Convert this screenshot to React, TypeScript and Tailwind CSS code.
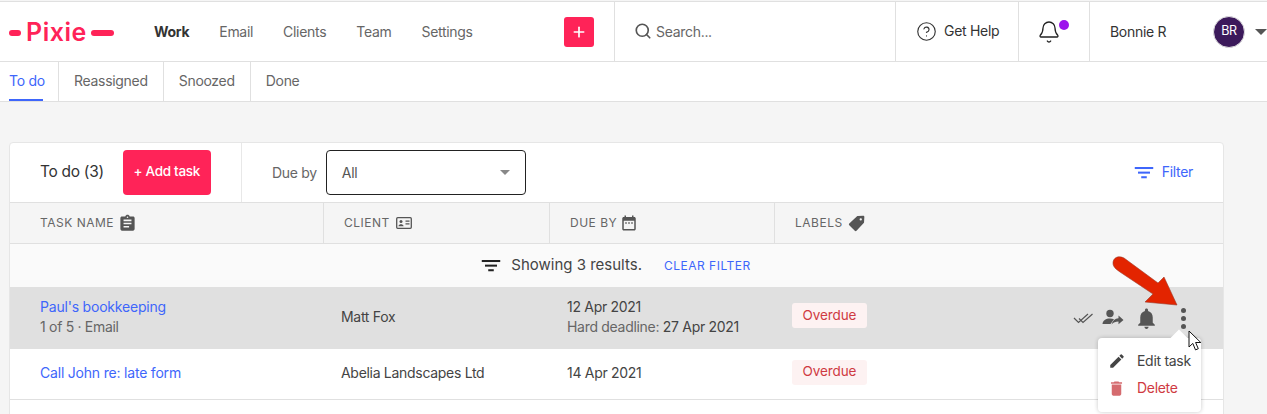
import React from "react";
import { Search, CircleHelp, Bell, Plus } from "lucide-react";

const FilterIcon = ({ className }: { className: string }) => (
  <svg viewBox="0 0 20 13" className={className} fill="currentColor">
    <rect x="0" y="0" width="20" height="2.2" />
    <rect x="3.5" y="5" width="13" height="2.2" />
    <rect x="7" y="10" width="6" height="2.2" />
  </svg>
);

const Clipboard = () => (
  <svg viewBox="0 0 24 24" className="w-[19px] h-[19px] text-[#555]" fill="currentColor">
    <path d="M19 3h-4.180C14.400 1.840 13.300 1 12 1s-2.400.840-2.820 2H5c-1.100 0-2 .900-2 2v14c0 1.100.900 2 2 2h14c1.100 0 2-.900 2-2V5c0-1.100-.900-2-2-2zm-7 0c.550 0 1 .450 1 1s-.450 1-1 1-1-.450-1-1 .450-1 1-1zm2 14H7v-2h7v2zm3-4H7v-2h10v2zm0-4H7V7h10v2z" />
  </svg>
);
const IdCard = () => (
  <svg viewBox="0 0 16 12" className="w-[16px] h-[12px] text-[#555]" fill="none" stroke="currentColor" strokeWidth="1.300">
    <rect x=".7" y=".7" width="14.600" height="10.600" rx="1" />
    <circle cx="5" cy="4.600" r="1.500" fill="currentColor" stroke="none" />
    <path d="M2.400 9.200c.3-1.500 1.400-2 2.600-2s2.300.5 2.600 2z" fill="currentColor" stroke="none" />
    <path d="M9.500 4.200h4M9.500 6.800h4" />
  </svg>
);
const CalendarIcon = () => (
  <svg viewBox="0 0 24 24" className="w-[18px] h-[18px] text-[#555]" fill="currentColor">
    <path d="M9 11H7v2h2v-2zm4 0h-2v2h2v-2zm4 0h-2v2h2v-2zm2-7h-1V2h-2v2H8V2H6v2H5c-1.110 0-2 .900-2 2v14c0 1.100.890 2 2 2h14c1.100 0 2-.900 2-2V6c0-1.100-.900-2-2-2zm0 16H5V9h14v11z" />
  </svg>
);
const TagIcon = () => (
  <svg viewBox="0 0 16 16" className="w-[17px] h-[17px] text-[#555]" fill="currentColor">
    <path fillRule="evenodd" d="M9.200.9 14.300.6c.6 0 1.100.5 1.100 1.100l-.3 5.100c0 .3-.1.500-.3.700L8 14.800a1.100 1.100 0 0 1-1.600 0L1.200 9.600a1.100 1.100 0 0 1 0-1.600L8.500 1.200c.2-.2.400-.3.700-.3zM12 3a1.100 1.100 0 1 0 0 2.200A1.100 1.100 0 0 0 12 3z" />
  </svg>
);

const Overdue = () => (
  <span className="inline-flex items-center justify-center w-[75px] h-[25px] rounded-[3px] bg-[#fdf2f2] text-[#cf3a42] text-[13.500px] tracking-[-0.1px] pb-[1px]">Overdue</span>
);

const tabs = ["To do", "Reassigned", "Snoozed", "Done"];

export default function App() {
  return (
    <div className="relative w-[1267px] h-[414px] overflow-hidden bg-[#f5f5f5] text-[#333] font-['Inter','Liberation_Sans',sans-serif] tracking-[-0.3px]">
      <header className="h-[61px] bg-white border-t border-t-[#e0e0e0] border-b border-b-[#e0e0e0] mt-[1px] flex items-stretch">
        <div className="w-[154px] shrink-0 flex items-center pl-[9px]">
          <div className="flex items-center pt-[2px]">
            <span className="w-[12px] h-[6px] rounded-full bg-[#ff2358] mr-[5px]" />
            <span className="text-[#ff2358] text-[25px] leading-none font-semibold tracking-[0.5px] mr-[4px]">Pixie</span>
            <span className="w-[23px] h-[6px] rounded-full bg-[#ff2358]" />
          </div>
        </div>
        <nav className="w-[410px] shrink-0 flex items-center gap-[30px] text-[14px] text-[#666] pb-[1px]">
          <span className="font-bold text-[#333]">Work</span>
          <span>Email</span>
          <span>Clients</span>
          <span>Team</span>
          <span>Settings</span>
        </nav>
        <div className="w-[51px] shrink-0 border-r border-[#e0e0e0] flex items-center">
          <button className="w-[30px] h-[30px] rounded-[3px] bg-[#ff2358] text-white flex items-center justify-center">
            <Plus size={16} strokeWidth={2.5} />
          </button>
        </div>
        <div className="w-[281px] shrink-0 border-r border-[#e0e0e0] flex items-center pl-[19px] gap-[4px] text-[14px] text-[#666] pb-[1px]">
          <Search size={18} strokeWidth={2.2} className="text-[#555]" />
          <span>Search...</span>
        </div>
        <div className="w-[123px] shrink-0 border-r border-[#e0e0e0] flex items-center pl-[20px] gap-[7px] text-[14px] text-[#333]">
          <CircleHelp size={21} strokeWidth={1.3} />
          <span className="pb-[2px]">Get Help</span>
        </div>
        <div className="w-[71px] shrink-0 border-r border-[#e0e0e0] flex items-center pl-[18px] relative">
          <Bell size={24} strokeWidth={1.3} className="text-[#222]" />
          <span className="absolute left-[40px] top-[18px] w-[10px] h-[10px] rounded-full bg-[#9c14ec]" />
        </div>
        <div className="flex-1 flex items-center pl-[20px] text-[14px] text-[#333]">
          <span className="w-[103px]">Bonnie R</span>
          <span className="w-[32px] h-[32px] rounded-full bg-[#3c1a5b] border border-[#e0e0e0] text-white text-[12.500px] flex items-center justify-center">BR</span>
          <span className="ml-[10px] w-0 h-0 border-x-[6px] border-x-transparent border-t-[6px] border-t-[#555]" />
        </div>
      </header>
      <div className="h-[40px] bg-white border-b border-[#e0e0e0] flex items-stretch text-[14px] text-[#666]">
        {tabs.map((t, i) => (
          <div key={t} className={i === 0 ? "relative w-[59px] pl-[9px] border-r border-[#e0e0e0] flex items-center text-[#3e66fb]" : i === 3 ? "px-[15px] flex items-center" : "px-[15px] border-r border-[#e0e0e0] flex items-center"}>
            <span className="pb-[2px]">{t}</span>
            {i === 0 && <span className="absolute left-[9px] bottom-0 w-[34px] h-[2px] bg-[#3e66fb]" />}
          </div>
        ))}
      </div>
      <main className="mt-[40px] ml-[9px] w-[1215px] border border-[#e6e6e6] rounded-t-[4px] bg-white">
        <div className="h-[60px] flex items-stretch border-b border-[#e0e0e0]">
          <div className="w-[232px] shrink-0 border-r border-[#e8e8e8] flex items-center pl-[30px] gap-[19px]">
            <span className="text-[15.500px] text-[#333] pb-[1px]">To do (3)</span>
            <button className="w-[88px] h-[45px] rounded-[4px] bg-[#ff2358] text-white text-[13.500px] font-medium pb-[2px]">+ Add task</button>
          </div>
          <div className="flex-1 flex items-center pl-[30px] text-[14px]">
            <span className="text-[#666] mr-[9px]">Due by</span>
            <div className="w-[200px] h-[45px] rounded-[4px] border border-[#222] flex items-center justify-between pl-[15px] pr-[15px] text-[#555]">
              <span>All</span>
              <span className="w-0 h-0 border-x-[5px] border-x-transparent border-t-[5px] border-t-[#888]" />
            </div>
          </div>
          <div className="flex items-center gap-[8px] pr-[30px] text-[14px] text-[#3e66fb]">
            <FilterIcon className="w-[20px] h-[12px]" />
            <span className="pb-[2px]">Filter</span>
          </div>
        </div>
        <div className="h-[41px] bg-[#f5f5f5] border-b border-[#e0e0e0] flex items-stretch text-[12px] tracking-[0.5px] text-[#666]">
          <div className="w-[314px] border-r border-[#e0e0e0] flex items-center gap-[4px] pl-[30px]"><span>TASK NAME</span><Clipboard /></div>
          <div className="w-[226px] border-r border-[#e0e0e0] flex items-center gap-[6px] pl-[20px]"><span>CLIENT</span><IdCard /></div>
          <div className="w-[225px] border-r border-[#e0e0e0] flex items-center gap-[3px] pl-[20px]"><span>DUE BY</span><CalendarIcon /></div>
          <div className="flex-1 flex items-center gap-[5px] pl-[20px]"><span>LABELS</span><TagIcon /></div>
        </div>
        <div className="h-[43px] bg-[#fafafa] flex items-center justify-center pr-[1px] tracking-[0px]">
          <FilterIcon className="w-[20px] h-[12px] text-[#222] mr-[10px]" />
          <span className="text-[15px] text-[#444]">Showing 3 results.</span>
          <span className="ml-[22px] text-[12px] tracking-[0.5px] text-[#3e66fb]">CLEAR FILTER</span>
        </div>
        <div className="h-[62px] bg-[#e0e0e0] flex items-center text-[14px]">
          <div className="w-[331px] pl-[30px] pb-[3px]">
            <div className="text-[#3e66fb] tracking-[-0.2px] leading-[20px]">Paul's bookkeeping</div>
            <div className="text-[#666] leading-[20px]">1 of 5 · Email</div>
          </div>
          <div className="w-[226px] text-[#444] pb-[3px]">Matt Fox</div>
          <div className="w-[225px] text-[#444] pb-[3px]">
            <div className="leading-[20px]">12 Apr 2021</div>
            <div className="leading-[20px]"><span className="text-[#666]">Hard deadline:</span> 27 Apr 2021</div>
          </div>
          <div className="pb-[5px]"><Overdue /></div>
          <div className="ml-auto mr-[37px] flex items-center text-[#555]">
            <svg viewBox="0 0 20 12" className="w-[20px] h-[12px]" fill="none" stroke="currentColor" strokeWidth="1.200">
              <path d="M1 6l4.500 4.500L15 2M6 6.500l4 4L19.500 2" />
            </svg>
            <svg viewBox="0 0 22 18" className="ml-[9px] w-[22px] h-[18px]" fill="currentColor">
              <circle cx="8" cy="4.500" r="3.700" />
              <path d="M.5 15c0-3.500 3.500-5.500 7.500-5.500 1.500 0 2.800.3 4 .8L8.500 15z" />
              <path d="M21.500 11l-5-4.500v2.700c-3.500.3-6 2.300-7 6.300 2-2.200 4-3 7-3v2.800z" />
            </svg>
            <svg viewBox="0 0 24 24" className="ml-[10px] w-[25px] h-[25px]" fill="currentColor">
              <path d="M12 22c1.100 0 2-.900 2-2h-4c0 1.100.900 2 2 2zm6-6v-5c0-3.070-1.630-5.640-4.500-6.320V4c0-.830-.670-1.500-1.500-1.500s-1.500.670-1.500 1.500v.680C7.640 5.360 6 7.920 6 11v5l-2 2v1h16v-1l-2-2z" />
            </svg>
            <div className="ml-[22px] flex flex-col gap-[3px]">
              <span className="w-[5px] h-[5px] rounded-full bg-[#555]" />
              <span className="w-[5px] h-[5px] rounded-full bg-[#555]" />
              <span className="w-[5px] h-[5px] rounded-full bg-[#555]" />
            </div>
          </div>
        </div>
        <div className="h-[51px] bg-white border-b border-[#e0e0e0] flex items-center text-[14px]">
          <div className="w-[331px] pl-[30px] text-[#3e66fb] tracking-[-0.2px] pb-[3px]">Call John re: late form</div>
          <div className="w-[226px] text-[#444] pb-[3px]">Abelia Landscapes Ltd</div>
          <div className="w-[225px] text-[#444] pb-[3px]">14 Apr 2021</div>
          <div className="pb-[4px]"><Overdue /></div>
        </div>
        <div className="h-[20px] bg-white" />
      </main>

      <div className="absolute left-[1098px] top-[338px] w-[103px] h-[74px] rounded-[4px] bg-white shadow-[0_0_4px_rgba(0,0,0,0.22)] text-[14px]">
        <span className="absolute left-[75px] -top-[6px] w-[12px] h-[12px] rotate-45 bg-white" />
        <div className="relative h-[47px] pt-[13px] flex items-start pl-[10px] gap-[11px] text-[#444]">
          <svg viewBox="0 0 24 24" className="w-[18px] h-[18px] mt-[1px] text-[#444]" fill="currentColor">
            <path d="M3 17.250V21h3.750L17.810 9.940l-3.750-3.750L3 17.250zM20.710 7.040a1 1 0 0 0 0-1.410l-2.340-2.340a1 1 0 0 0-1.410 0l-1.830 1.830 3.750 3.750 1.830-1.830z" />
          </svg>
          <span className="leading-[20px] text-[14px]">Edit task</span>
        </div>
        <div className="relative flex items-start pl-[10px] gap-[11px] -mt-[7px] text-[#cf3a42]">
          <svg viewBox="0 0 24 24" className="w-[19px] h-[19px] -ml-[1px] mt-[1px] text-[#d56b6f]" fill="currentColor">
            <path d="M6 19c0 1.100.900 2 2 2h8c1.100 0 2-.900 2-2V7H6v12zM19 4h-3.500l-1-1h-5l-1 1H5v2h14V4z" />
          </svg>
          <span className="leading-[20px] text-[14px]">Delete</span>
        </div>
      </div>

      <svg className="absolute left-[1105px] top-[250px] pointer-events-none" width="90" height="60" viewBox="0 0 90 60">
        <path d="M8 13C8 8 13 5 19 8L53 33 59 27 72 55 40 52 48 44 15 22C11 19 8 17 8 13Z" fill="#e32400" stroke="#9c3a2a" strokeWidth=".6" />
      </svg>
      <svg className="absolute left-[1188px] top-[330px] pointer-events-none" width="14" height="22" viewBox="0 0 14 22">
        <path d="M1 1v16l3.800-3.600 2.700 6.500 2.800-1.200-2.700-6.200h5.200z" fill="#fff" stroke="#111" strokeWidth="1" />
      </svg>
    </div>
  );
}
